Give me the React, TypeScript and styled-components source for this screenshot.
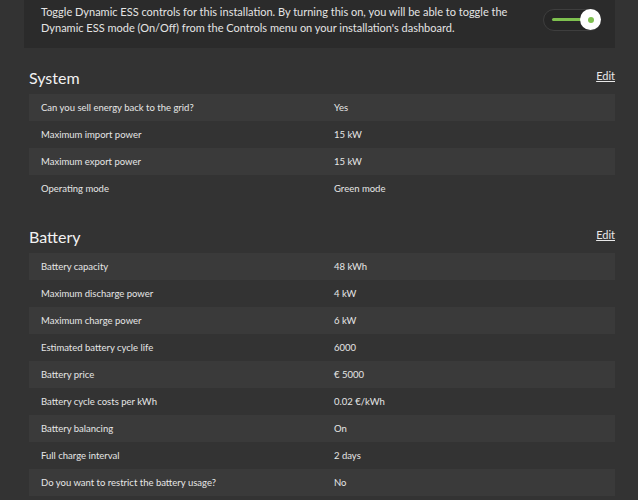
import React from "react";
import styled, { createGlobalStyle } from "styled-components";

const GlobalStyle = createGlobalStyle`
  html, body {
    margin: 0;
    padding: 0;
    background: #333333;
    font-family: Lato, "Open Sans", "Liberation Sans", sans-serif;
    color: #e8e8e8;
  }
`;

// Contenedor de la página
const Page = styled.div`
  display: flex;
  flex-direction: column;
  padding: 0 23px 0 24px;
`;

// Tarjeta superior con el toggle
const ToggleCard = styled.div`
  display: flex;
  align-items: center;
  justify-content: space-between;
  background: #2b2b2b;
  height: 48px;
  padding: 0 14px 0 17px;
  margin-bottom: 18px;
  box-sizing: border-box;
`;

const ToggleText = styled.p`
  margin: 0;
  margin-top: -8px;
  font-size: 11px;
  line-height: 16px;
  white-space: nowrap;
  color: #e4e4e4;
`;

const Switch = styled.div`
  position: relative;
  width: 58px;
  height: 22px;
  margin-top: -8px;
  border-radius: 11px;
  background: #262626;
  border: 1px solid #3e3e3e;
  box-sizing: border-box;
  flex-shrink: 0;
`;

const SwitchBar = styled.span`
  position: absolute;
  left: 8px;
  right: 10px;
  top: 8px;
  height: 3px;
  border-radius: 2px;
  background: #7ec04f;
`;

const SwitchKnob = styled.span`
  position: absolute;
  right: -1px;
  top: -1px;
  width: 21px;
  height: 21px;
  border-radius: 50%;
  background: #ffffff;
  display: flex;
  align-items: center;
  justify-content: center;

  &::after {
    content: "";
    width: 6px;
    height: 6px;
    border-radius: 50%;
    background: #7ec04f;
  }
`;

// Secciones
const Sections = styled.div`
  display: flex;
  flex-direction: column;
  gap: 23px;
  padding-left: 5px;
`;

const Section = styled.section`
  display: flex;
  flex-direction: column;
`;

const SectionHeader = styled.div`
  display: flex;
  align-items: center;
  justify-content: space-between;
  height: 23px;
  margin-bottom: 5px;
`;

const SectionTitle = styled.h2`
  margin: 0;
  font-size: 16px;
  font-weight: 400;
  color: #f2f2f2;
`;

const EditLink = styled.a`
  font-size: 11px;
  color: #e8e8e8;
  text-decoration: underline;
  margin-top: -5px;
  cursor: pointer;
`;

const Row = styled.div<{ $striped?: boolean }>`
  display: grid;
  grid-template-columns: 305px 1fr;
  align-items: center;
  height: 27px;
  background: ${({ $striped }) => ($striped ? "#3a3a3a" : "transparent")};
  font-size: 9.5px;
  color: #e6e6e6;
`;

const Label = styled.span`
  padding-left: 12px;
`;

const Value = styled.span``;

type Item = [string, string];

const systemItems: Item[] = [
  ["Can you sell energy back to the grid?", "Yes"],
  ["Maximum import power", "15 kW"],
  ["Maximum export power", "15 kW"],
  ["Operating mode", "Green mode"],
];

const batteryItems: Item[] = [
  ["Battery capacity", "48 kWh"],
  ["Maximum discharge power", "4 kW"],
  ["Maximum charge power", "6 kW"],
  ["Estimated battery cycle life", "6000"],
  ["Battery price", "€ 5000"],
  ["Battery cycle costs per kWh", "0.02 €/kWh"],
  ["Battery balancing", "On"],
  ["Full charge interval", "2 days"],
  ["Do you want to restrict the battery usage?", "No"],
];

const SettingsSection = ({ title, items }: { title: string; items: Item[] }) => (
  <Section>
    <SectionHeader>
      <SectionTitle>{title}</SectionTitle>
      <EditLink>Edit</EditLink>
    </SectionHeader>
    {items.map(([label, value], i) => (
      <Row key={label} $striped={i % 2 === 0}>
        <Label>{label}</Label>
        <Value>{value}</Value>
      </Row>
    ))}
  </Section>
);

export default function App() {
  return (
    <>
      <GlobalStyle />
      <Page>
        <ToggleCard>
          <ToggleText>
            Toggle Dynamic ESS controls for this installation. By turning this on, you will be able to toggle the
            <br />
            Dynamic ESS mode (On/Off) from the Controls menu on your installation's dashboard.
          </ToggleText>
          <Switch>
            <SwitchBar />
            <SwitchKnob />
          </Switch>
        </ToggleCard>
        <Sections>
          <SettingsSection title="System" items={systemItems} />
          <SettingsSection title="Battery" items={batteryItems} />
        </Sections>
      </Page>
    </>
  );
}
